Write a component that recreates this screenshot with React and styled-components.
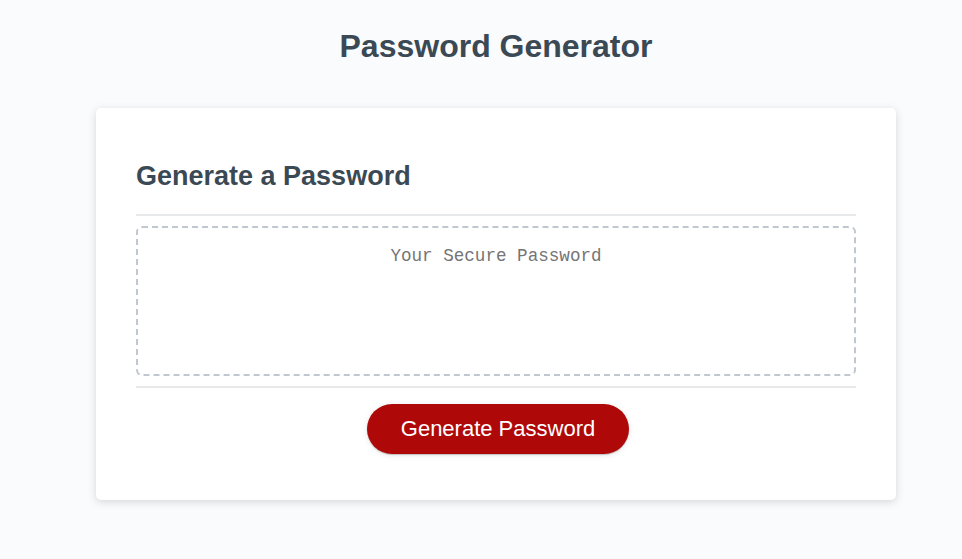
import React from 'react'
import styled, { createGlobalStyle } from 'styled-components'

const GlobalStyle = createGlobalStyle`
	body {
		margin: 0;
		font-family: "Liberation Sans", Arial, sans-serif;
		background-color: #f9fbfd;
	}
`

const App = () => {
	return (
		<Wrapper>
			<GlobalStyle />
			<Header>
				<Title>Password Generator</Title>
			</Header>
			<Card>
				<CardHeader>
					<CardTitle>Generate a Password</CardTitle>
				</CardHeader>
				<CardBody>
					<PasswordBox
						id='password'
						placeholder='Your Secure Password'
						aria-label='Generated Password'
						readOnly
					/>
				</CardBody>
				<CardFooter>
					<Button type='button'>Generate Password</Button>
				</CardFooter>
			</Card>
		</Wrapper>
	)
}

const Wrapper = styled.div`
	padding: 7px 0 40px 30px;
`

const Header = styled.header`
	text-align: center;
	padding: 0 20px 21px;
	color: hsl(206, 17%, 28%);
`

const Title = styled.h1`
	margin: 21px 0 22px;
	font-size: 32px;
	line-height: 37px;
	font-weight: bold;
`

const Card = styled.section`
	box-sizing: border-box;
	max-width: 800px;
	margin: 0 auto;
	padding: 30px 40px;
	background-color: #fff;
	border-radius: 5px;
	box-shadow: rgba(0, 0, 0, 0.15) 0px 2px 8px 0px;
	color: hsl(206, 17%, 28%);
	font-size: 18px;
`

const Divider = `
	content: " ";
	display: block;
	width: 100%;
	height: 2px;
	background: #e7e9eb;
`

const CardHeader = styled.div`
	&::after {
		${Divider}
	}
`

const CardTitle = styled.h2`
	margin: 23px 0 22px;
	font-size: 27px;
	line-height: 31px;
	font-weight: bold;
`

const CardBody = styled.div`
	min-height: 100px;
`

const PasswordBox = styled.textarea`
	appearance: none;
	display: block;
	box-sizing: border-box;
	width: 100%;
	height: 150px;
	margin: 10px 0;
	padding: 17px 15px 83px;
	border: 2px dashed #c0c7cf;
	border-radius: 6px;
	font-family: "Liberation Mono", "DejaVu Sans Mono", monospace;
	font-size: 17.6px;
	line-height: 23px;
	text-align: center;
	resize: none;
	overflow: hidden;
	outline: none;

	&::placeholder {
		color: #757575;
	}
`

const CardFooter = styled.div`
	text-align: center;

	&::before {
		${Divider}
	}
`

const Button = styled.button`
	display: inline-block;
	margin: 16px 16px 16px 20px;
	padding: 14px 34px;
	border: none;
	border-radius: 25px;
	background-color: hsl(360, 91%, 36%);
	box-shadow: rgba(0, 0, 0, 0.1) 0px 1px 6px 0px, rgba(0, 0, 0, 0.2) 0px 1px 1px 0px;
	color: #fff;
	font-family: "Liberation Sans", Arial, sans-serif;
	font-size: 22px;
	line-height: 22px;
	cursor: pointer;
`

export default App
